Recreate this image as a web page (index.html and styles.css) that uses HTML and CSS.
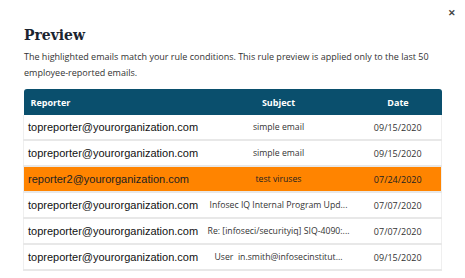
FILE: index.html
```html
<!DOCTYPE html>
<html>
<head>
    <meta charset="UTF-8">
    <title>Preview</title>
    <link rel="stylesheet" href="styles.css">
</head>
<body>
    <div class="modal">
        <button class="close">&#x2715;</button>
        <h1>Preview</h1>
        <p class="intro">The highlighted emails match your rule conditions. This rule preview is applied only to the last 50 employee-reported emails.</p>

        <table class="preview">
            <thead>
                <tr>
                    <th class="col-reporter">Reporter</th>
                    <th class="col-subject">Subject</th>
                    <th class="col-date">Date</th>
                </tr>
            </thead>
            <tbody>
                <tr>
                    <td class="email">topreporter@yourorganization.com</td>
                    <td class="subject">simple email</td>
                    <td class="date">09/15/2020</td>
                </tr>
                <tr>
                    <td class="email">topreporter@yourorganization.com</td>
                    <td class="subject">simple email</td>
                    <td class="date">09/15/2020</td>
                </tr>
                <tr class="match">
                    <td class="email">reporter2@yourorganization.com</td>
                    <td class="subject">test viruses</td>
                    <td class="date">07/24/2020</td>
                </tr>
                <tr>
                    <td class="email">topreporter@yourorganization.com</td>
                    <td class="subject">Infosec IQ Internal Program Upd...</td>
                    <td class="date">07/07/2020</td>
                </tr>
                <tr>
                    <td class="email">topreporter@yourorganization.com</td>
                    <td class="subject">Re: [infoseci/securityiq] SIQ-4090:...</td>
                    <td class="date">07/07/2020</td>
                </tr>
                <tr>
                    <td class="email">topreporter@yourorganization.com</td>
                    <td class="subject">User&nbsp; in.smith@infosecinstitut...</td>
                    <td class="date">09/15/2020</td>
                </tr>
            </tbody>
        </table>
    </div>
</body>
</html>
```
FILE: styles.css
```css
body {
    margin: 0;
    background: white;
    font-family: 'Open Sans', sans-serif;
    color: #222;
}
.modal {
    position: relative;
    padding: 23px 23px 0 23px;
}
.close {
    position: absolute;
    top: 6px;
    right: 7px;
    background: none;
    border: none;
    color: #444;
    font-size: 9px;
    font-weight: bold;
    padding: 2px;
    cursor: pointer;
}
h1 {
    font-family: 'DejaVu Serif', serif;
    font-stretch: condensed;
    font-size: 15.5px;
    font-weight: bold;
    color: #1b2430;
    margin: 0 0 0 1px;
    line-height: 24px;
}
.intro {
    font-size: 9px;
    line-height: 16px;
    color: #333;
    margin: 2px 0 8px 1px;
}
.preview {
    width: 100%;
    border-collapse: collapse;
    table-layout: fixed;
}
.preview th {
    background: #0a4f6d;
    color: white;
    font-size: 9px;
    font-weight: bold;
    height: 26px;
    padding: 0;
}
.preview th:first-child {
    border-top-left-radius: 3px;
    text-align: left;
    padding-left: 7px;
}
.preview th:last-child {
    border-top-right-radius: 3px;
}
.col-reporter { width: 172px; }
.col-subject { width: 152px; }
.preview td {
    height: 24px;
    padding: 0;
    border-bottom: 2px solid #e8e8e8;
    text-align: center;
    white-space: nowrap;
    overflow: hidden;
}
.preview td:first-child {
    border-left: 1px solid #efefef;
}
.preview td:last-child {
    border-right: 1px solid #efefef;
}
.preview td.email {
    font-family: 'Liberation Sans', Arial, sans-serif;
    font-size: 11px;
    color: #111;
    text-align: left;
    padding-left: 4px;
}
.preview td.subject {
    font-size: 8.7px;
    color: #333;
}
.preview td.date {
    font-size: 9px;
    color: #333;
}
.preview tr.match td {
    background: #ff8400;
    color: #222;
}
```
